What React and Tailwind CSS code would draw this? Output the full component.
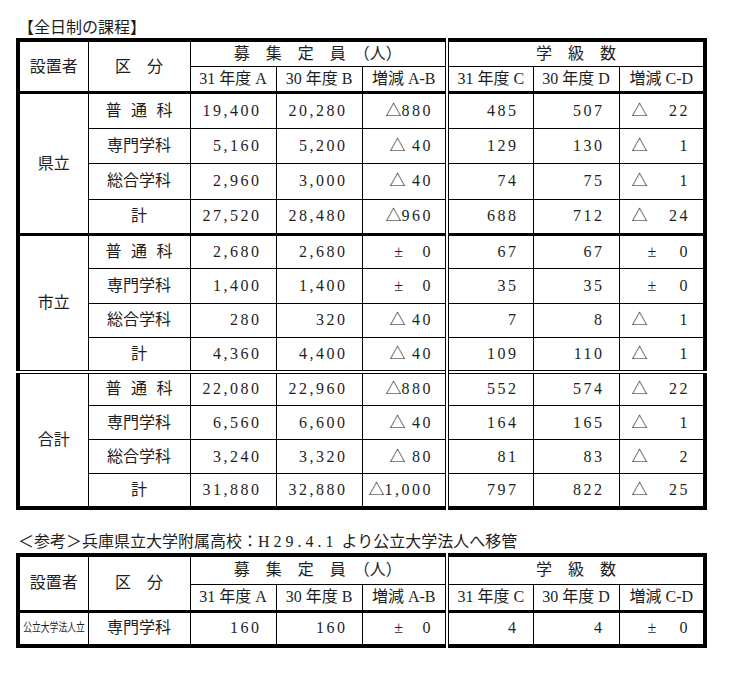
const F = "font-['Liberation_Serif','Noto_Sans_CJK_JP',serif]"

const groups = [
  {
    name: '県立',
    rowH: 'h-[35.5px]',
    top: '',
    rows: [
      ['普通科', '19,400', '20,280', ['△', '880'], '485', '507', ['△', '22']],
      ['専門学科', '5,160', '5,200', ['△', ' 40'], '129', '130', ['△', '1']],
      ['総合学科', '2,960', '3,000', ['△', ' 40'], '74', '75', ['△', '1']],
      ['計', '27,520', '28,480', ['△', '960'], '688', '712', ['△', '24']],
    ],
  },
  {
    name: '市立',
    rowH: 'h-[34.25px]',
    top: 'border-t-[3px]',
    rows: [
      ['普通科', '2,680', '2,680', ['±', '   0'], '67', '67', ['±', '0']],
      ['専門学科', '1,400', '1,400', ['±', '   0'], '35', '35', ['±', '0']],
      ['総合学科', '280', '320', ['△', ' 40'], '7', '8', ['△', '1']],
      ['計', '4,360', '4,400', ['△', ' 40'], '109', '110', ['△', '1']],
    ],
  },
  {
    name: '合計',
    rowH: 'h-[34px]',
    top: 'border-t-[4px] [border-top-style:double]',
    rows: [
      ['普通科', '22,080', '22,960', ['△', '880'], '552', '574', ['△', '22']],
      ['専門学科', '6,560', '6,600', ['△', ' 40'], '164', '165', ['△', '1']],
      ['総合学科', '3,240', '3,320', ['△', ' 80'], '81', '83', ['△', '2']],
      ['計', '31,880', '32,880', ['△', '1,000'], '797', '822', ['△', '25']],
    ],
  },
]

const cell = 'border border-black p-0'
const dbl = 'border-r-[4px] [border-right-style:double]'
const num = 'text-right pr-[14px] tracking-[2.5px]'

const Cols = () => (
  <colgroup>
    <col className="w-[70px]" />
    <col className="w-[102px]" />
    <col className="w-[86px]" />
    <col className="w-[86px]" />
    <col className="w-[85px]" />
    <col className="w-[86px]" />
    <col className="w-[86px]" />
    <col className="w-[86px]" />
  </colgroup>
)

const Head = ({ row1 }) => (
  <thead>
    <tr className={row1}>
      <th rowSpan={2} className={`${cell} border-b-[3px] font-normal text-center`}>設置者</th>
      <th rowSpan={2} className={`${cell} border-b-[3px] font-normal text-center`}>区　分</th>
      <th colSpan={3} className={`${cell} ${dbl} font-normal text-center`}>募　集　定　員　（人）</th>
      <th colSpan={3} className={`${cell} font-normal text-center`}>学　級　数</th>
    </tr>
    <tr className="h-[26.5px]">
      <th className={`${cell} border-b-[3px] font-normal text-center`}>31 年度 A</th>
      <th className={`${cell} border-b-[3px] font-normal text-center`}>30 年度 B</th>
      <th className={`${cell} border-b-[3px] ${dbl} font-normal text-center`}>増減 A-B</th>
      <th className={`${cell} border-b-[3px] font-normal text-center`}>31 年度 C</th>
      <th className={`${cell} border-b-[3px] font-normal text-center`}>30 年度 D</th>
      <th className={`${cell} border-b-[3px] font-normal text-center`}>増減 C-D</th>
    </tr>
  </thead>
)

const Subject = ({ name }) =>
  name === '普通科' ? (
    <span className="tracking-[9.5px] -mr-[9.5px]">{name}</span>
  ) : (
    <span>{name}</span>
  )

const Diff = ({ v }) => (
  <div className="flex justify-end items-center pr-[12px]">
    <span>{v[0]}</span>
    <span className="whitespace-pre tracking-[2.5px]">{v[1]}</span>
  </div>
)

const DiffCD = ({ v }) => (
  <div className={`flex justify-between items-center pr-[13px] ${v[0] === '±' ? 'pl-[28px]' : 'pl-[12px]'}`}>
    <span>{v[0]}</span>
    <span className="tracking-[2.5px]">{v[1]}</span>
  </div>
)

const Row = ({ r, top, h, first, name }) => {
  const t = first ? top : ''
  return (
    <tr className={h}>
      {first && (
        <td rowSpan={4} className={`${cell} ${top} text-center`}>
          {name}
        </td>
      )}
      <td className={`${cell} ${t} text-center`}>
        <Subject name={r[0]} />
      </td>
      <td className={`${cell} ${t} ${num}`}>{r[1]}</td>
      <td className={`${cell} ${t} ${num}`}>{r[2]}</td>
      <td className={`${cell} ${t} ${dbl}`}>
        <Diff v={r[3]} />
      </td>
      <td className={`${cell} ${t} ${num}`}>{r[4]}</td>
      <td className={`${cell} ${t} ${num}`}>{r[5]}</td>
      <td className={`${cell} ${t}`}>
        <DiffCD v={r[6]} />
      </td>
    </tr>
  )
}

export default function App() {
  return (
    <div className={`${F} bg-white text-[#1e1e1e] text-[16px] leading-[20px] w-[743px] h-[677px] pt-[18px] pl-[16px]`}>
      <div className="h-[20px] pl-[2px]">【全日制の課程】</div>
      <table className="table-fixed border-collapse border-4 border-black w-[691px]">
        <Cols />
        <Head row1="h-[26px]" />
        <tbody>
          {groups.map((g) =>
            g.rows.map((r, i) => (
              <Row key={g.name + i} r={r} top={g.top} h={g.rowH} first={i === 0} name={g.name} />
            ))
          )}
        </tbody>
      </table>

      <div className="mt-[21px] h-[21px] leading-[21px] pl-[2px]">
        ＜参考＞兵庫県立大学附属高校：<span className="tracking-[4px]">H29.4.1</span> より公立大学法人へ移管
      </div>
      <table className="mt-[1px] table-fixed border-collapse border-4 border-black w-[691px]">
        <Cols />
        <Head row1="h-[30px]" />
        <tbody>
          <tr className="h-[35px]">
            <td className={`${cell} text-center`}>
              <div className="flex justify-center">
                <span className="inline-block whitespace-nowrap text-[12px] scale-x-[0.73]">公立大学法人立</span>
              </div>
            </td>
            <td className={`${cell} text-center`}>専門学科</td>
            <td className={`${cell} ${num}`}>160</td>
            <td className={`${cell} ${num}`}>160</td>
            <td className={`${cell} ${dbl}`}>
              <Diff v={['±', '   0']} />
            </td>
            <td className={`${cell} ${num}`}>4</td>
            <td className={`${cell} ${num}`}>4</td>
            <td className={cell}>
              <DiffCD v={['±', '0']} />
            </td>
          </tr>
        </tbody>
      </table>
    </div>
  )
}
